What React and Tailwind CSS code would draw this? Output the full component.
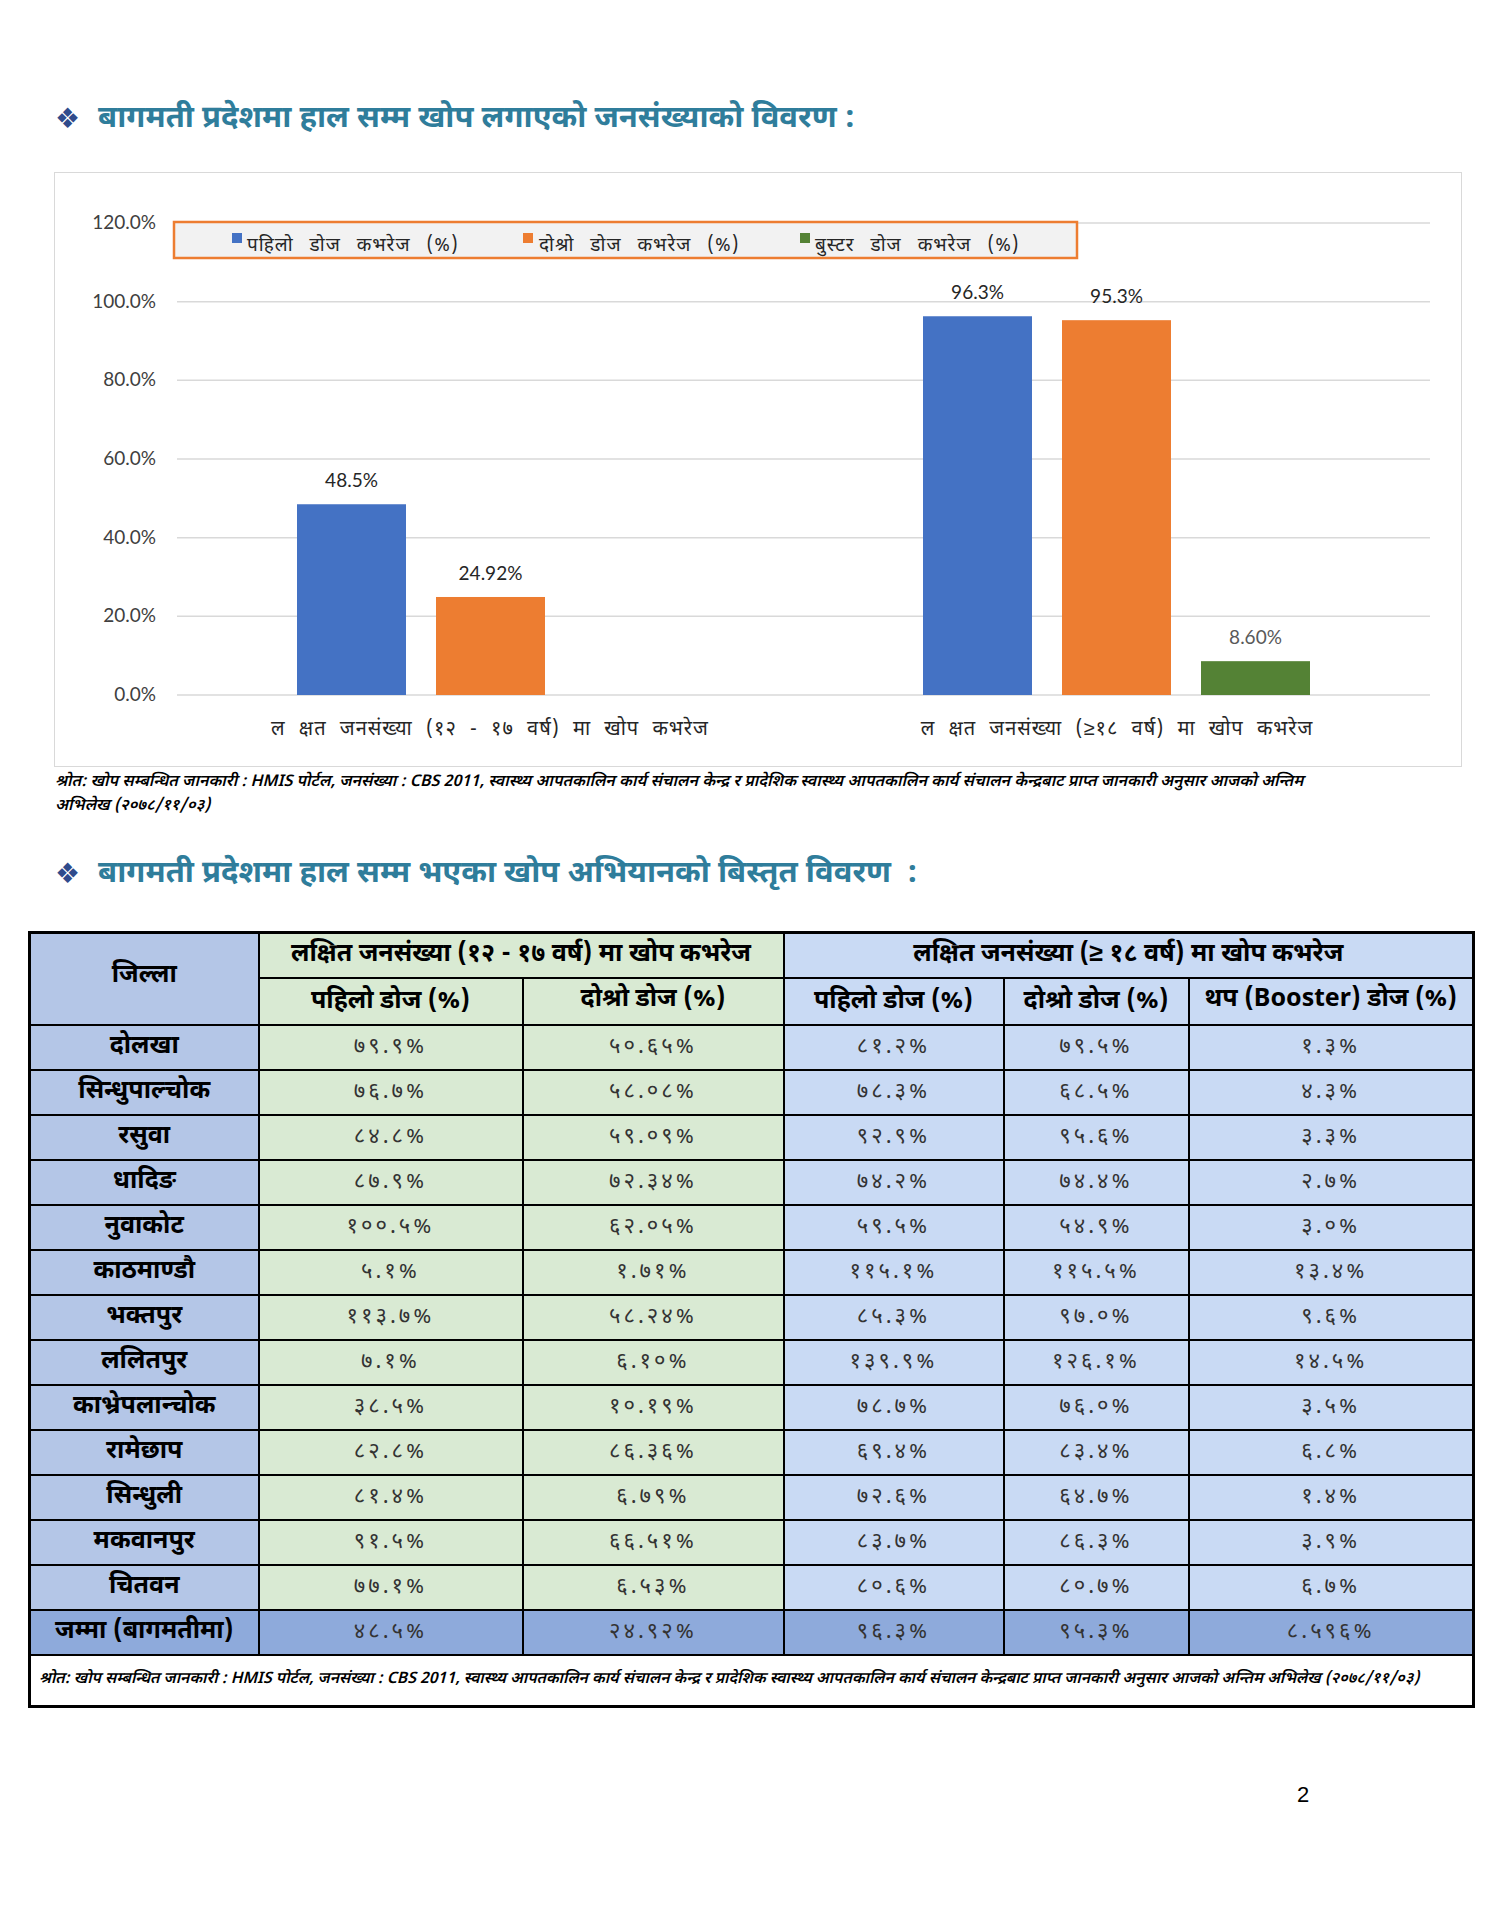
import React from 'react'

const dev = { fontFamily: '"Noto Sans Devanagari", "Noto Sans", "Liberation Sans", sans-serif' }
const lat = { fontFamily: 'Lato, "Noto Sans Devanagari", "Noto Sans", sans-serif' }

const rows = [
    ['दोलखा', '७९.९%', '५०.६५%', '८१.२%', '७९.५%', '१.३%'],
    ['सिन्धुपाल्चोक', '७६.७%', '५८.०८%', '७८.३%', '६८.५%', '४.३%'],
    ['रसुवा', '८४.८%', '५९.०९%', '९२.९%', '९५.६%', '३.३%'],
    ['धादिङ', '८७.९%', '७२.३४%', '७४.२%', '७४.४%', '२.७%'],
    ['नुवाकोट', '१००.५%', '६२.०५%', '५९.५%', '५४.९%', '३.०%'],
    ['काठमाण्डौ', '५.१%', '१.७१%', '११५.१%', '११५.५%', '१३.४%'],
    ['भक्तपुर', '११३.७%', '५८.२४%', '८५.३%', '९७.०%', '९.६%'],
    ['ललितपुर', '७.१%', '६.१०%', '१३९.९%', '१२६.१%', '१४.५%'],
    ['काभ्रेपलान्चोक', '३८.५%', '१०.१९%', '७८.७%', '७६.०%', '३.५%'],
    ['रामेछाप', '८२.८%', '८६.३६%', '६९.४%', '८३.४%', '६.८%'],
    ['सिन्धुली', '८१.४%', '६.७९%', '७२.६%', '६४.७%', '१.४%'],
    ['मकवानपुर', '९१.५%', '६६.५१%', '८३.७%', '८६.३%', '३.९%'],
    ['चितवन', '७७.१%', '६.५३%', '८०.६%', '८०.७%', '६.७%'],
]
const total = ['जम्मा (बागमतीमा)', '४८.५%', '२४.९२%', '९६.३%', '९५.३%', '८.५९६%']

const source = 'श्रोत: खोप सम्बन्धित जानकारी : HMIS पोर्टल, जनसंख्या : CBS 2011, स्वास्थ्य आपतकालिन कार्य संचालन केन्द्र र प्रादेशिक स्वास्थ्य आपतकालिन कार्य संचालन केन्द्रबाट प्राप्त जानकारी अनुसार आजको अन्तिम'

function Heading({ children }) {
    return (
        <div className="flex items-center h-[40px] pl-[55px]">
            <span className="text-[28px] leading-none text-[#2f4b8c] w-[43px]" style={{ fontFamily: '"DejaVu Sans", sans-serif' }}>❖</span>
            <span className="text-[31px] leading-none font-bold text-[#2f7d9b]" style={dev}>{children}</span>
        </div>
    )
}

// chart geometry, px inside the chart box
const y0 = 522
const perPct = 3.933
const bars = [
    { x: 242, v: 48.5, c: '#4472c4', label: '48.5%' },
    { x: 381, v: 24.92, c: '#ed7d31', label: '24.92%' },
    { x: 868, v: 96.3, c: '#4472c4', label: '96.3%' },
    { x: 1007, v: 95.3, c: '#ed7d31', label: '95.3%' },
    { x: 1146, v: 8.6, c: '#548235', label: '8.60%', grey: true },
]

function Chart() {
    const ticks = [0, 20, 40, 60, 80, 100, 120]
    const legendText = { ...dev, letterSpacing: '1px', wordSpacing: '10px' }
    const catText = { ...dev, letterSpacing: '1px', wordSpacing: '7px' }
    return (
        <div className="ml-[54px] mt-[33px] w-[1408px] h-[595px] border border-[#d9d9d9] bg-white">
            <svg width="1406" height="593" className="block">
                {ticks.map((t) => {
                    const y = y0 - t * perPct
                    return (
                        <g key={t}>
                            <line x1="122" x2="1375" y1={y} y2={y} stroke="#d9d9d9" strokeWidth="1.5" />
                            <text x="101" y={y + 6} textAnchor="end" fontSize="19" fill="#404040" style={lat}>{t.toFixed(1)}%</text>
                        </g>
                    )
                })}
                {bars.map((b) => {
                    const h = b.v * perPct
                    return (
                        <g key={b.x}>
                            <rect x={b.x} y={y0 - h} width="109" height={h} fill={b.c} />
                            <text x={b.x + 54.5} y={y0 - h - 17} textAnchor="middle" fontSize="19" fill={b.grey ? '#595959' : '#262626'} style={lat}>{b.label}</text>
                        </g>
                    )
                })}
                <rect x="119" y="49" width="903" height="36" fill="#f2f2f2" stroke="#ed7d31" strokeWidth="2.5" />
                <rect x="177" y="60" width="10" height="10" fill="#4472c4" />
                <text x="192" y="78" fontSize="19" fill="#262626" style={legendText}>पहिलो डोज कभरेज (%)</text>
                <rect x="468" y="60" width="10" height="10" fill="#ed7d31" />
                <text x="484" y="78" fontSize="19" fill="#262626" style={legendText}>दोश्रो डोज कभरेज (%)</text>
                <rect x="745" y="60" width="10" height="10" fill="#548235" />
                <text x="760" y="78" fontSize="19" fill="#262626" style={legendText}>बुस्टर डोज कभरेज (%)</text>
                <text x="435" y="562" textAnchor="middle" fontSize="20" fill="#262626" style={catText}>ल क्षत जनसंख्या (१२ - १७ वर्ष) मा खोप कभरेज</text>
                <text x="1062" y="562" textAnchor="middle" fontSize="20" fill="#262626" style={catText}>ल क्षत जनसंख्या (≥१८ वर्ष) मा खोप कभरेज</text>
            </svg>
        </div>
    )
}

function App() {
    const cell = 'border-2 border-black text-center'
    const head = 'text-[25px] font-bold leading-tight'
    const num = 'text-[22px] text-[#333] tracking-[3px]'
    return (
        <div className="w-[1488px] h-[1925px] bg-white relative" style={dev}>
            <div className="pt-[99px]">
                <Heading>बागमती प्रदेशमा हाल सम्म खोप लगाएको जनसंख्याको विवरण :</Heading>
            </div>

            <Chart />

            {/* source under chart */}
            <p className="ml-[55px] mt-[4px] text-[16px] leading-[24px] italic font-semibold text-black">
                {source}
                <br />
                अभिलेख (२०७८/११/०३)
            </p>

            <div className="mt-[35px]">
                <Heading>बागमती प्रदेशमा हाल सम्म भएका खोप अभियानको बिस्तृत विवरण &nbsp;:</Heading>
            </div>

            <table className="ml-[28px] mt-[37px] w-[1444px] border-collapse border-[3px] border-black table-fixed">
                <colgroup>
                    <col className="w-[229px]" />
                    <col className="w-[264px]" />
                    <col className="w-[261px]" />
                    <col className="w-[220px]" />
                    <col className="w-[185px]" />
                    <col className="w-[285px]" />
                </colgroup>
                <tbody>
                    <tr className="h-[45px]">
                        <td rowSpan={2} className={`${cell} ${head} bg-[#b4c6e7] align-middle pb-[4px]`}>जिल्ला</td>
                        <td colSpan={2} className={`${cell} ${head} bg-[#d9ead3]`}>लक्षित जनसंख्या (१२ - १७ वर्ष) मा खोप कभरेज</td>
                        <td colSpan={3} className={`${cell} ${head} bg-[#c9daf4]`}>लक्षित जनसंख्या (≥ १८ वर्ष) मा खोप कभरेज</td>
                    </tr>
                    <tr className="h-[47px]">
                        <td className={`${cell} ${head} bg-[#d9ead3] pt-[3px]`}>पहिलो डोज (%)</td>
                        <td className={`${cell} ${head} bg-[#d9ead3]`}>दोश्रो डोज (%)</td>
                        <td className={`${cell} ${head} bg-[#c9daf4] pt-[3px]`}>पहिलो डोज (%)</td>
                        <td className={`${cell} ${head} bg-[#c9daf4] pt-[3px]`}>दोश्रो डोज (%)</td>
                        <td className={`${cell} ${head} bg-[#c9daf4]`}>थप (Booster) डोज (%)</td>
                    </tr>
                    {rows.map((r) => (
                        <tr key={r[0]} className="h-[45px]">
                            <td className={`${cell} ${head} bg-[#b4c6e7] pt-[2px]`}>{r[0]}</td>
                            <td className={`${cell} bg-[#d9ead3] ${num}`}>{r[1]}</td>
                            <td className={`${cell} bg-[#d9ead3] ${num}`}>{r[2]}</td>
                            <td className={`${cell} bg-[#c9daf4] ${num}`}>{r[3]}</td>
                            <td className={`${cell} bg-[#c9daf4] ${num}`}>{r[4]}</td>
                            <td className={`${cell} bg-[#c9daf4] ${num}`}>{r[5]}</td>
                        </tr>
                    ))}
                    <tr className="h-[45px] bg-[#8eaadb]">
                        <td className={`${cell} ${head} pt-[2px]`}>{total[0]}</td>
                        {total.slice(1).map((v, i) => (
                            <td key={i} className={`${cell} ${num}`}>{v}</td>
                        ))}
                    </tr>
                    <tr className="h-[52px]">
                        <td colSpan={6} className="border-2 border-black bg-white text-left pl-[8px] text-[15.7px] italic font-semibold">
                            {source} अभिलेख (२०७८/११/०३)
                        </td>
                    </tr>
                </tbody>
            </table>

            <div className="absolute left-[1297px] top-[1778px] text-[22px] text-black" style={{ fontFamily: '"Liberation Sans", Arial, sans-serif' }}>2</div>
        </div>
    )
}

export default App
